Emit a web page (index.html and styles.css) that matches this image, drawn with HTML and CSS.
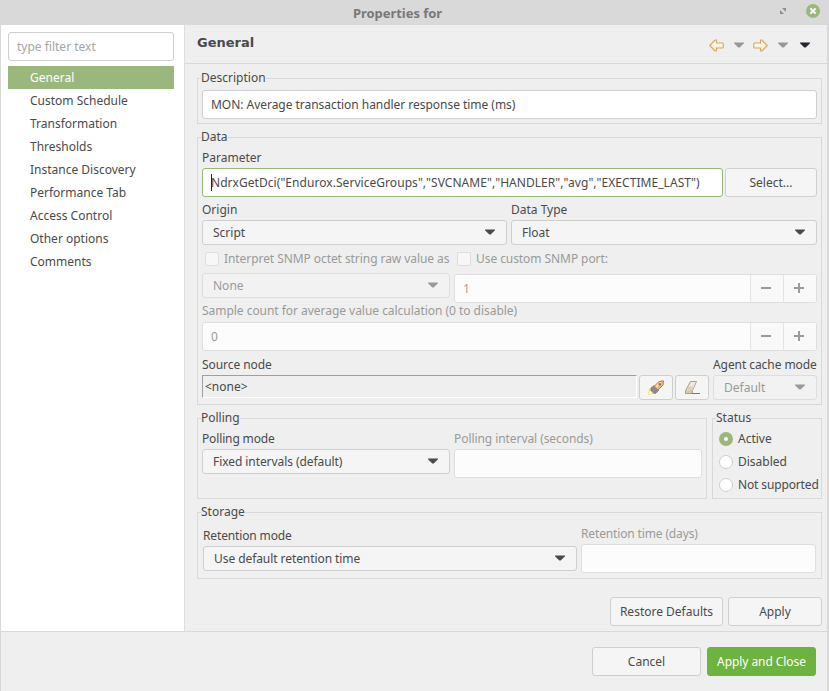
FILE: index.html
```html
<!DOCTYPE html>
<html lang="en">
<head>
<meta charset="utf-8">
<title>Properties for</title>
<link rel="stylesheet" href="styles.css">
</head>
<body>
<svg class="defs" width="0" height="0" aria-hidden="true">
  <defs>
    <symbol id="tri" viewBox="0 0 10 6"><path d="M0 .5h10v.8L5.7 5.5H4.3L0 1.3z" fill="currentColor"/></symbol>
    <symbol id="minus" viewBox="0 0 10 10"><path d="M0 4h10v2H0z" fill="currentColor"/></symbol>
    <symbol id="plus" viewBox="0 0 10 10"><path d="M0 4h4V0h2v4h4v2H6v4H4V6H0z" fill="currentColor"/></symbol>
    <linearGradient id="gold" x1="0" y1="0" x2="0" y2="1"><stop offset="0" stop-color="#fff"/><stop offset="1" stop-color="#fbe9c3"/></linearGradient>
    <symbol id="arrow" viewBox="0 0 15 13"><path d="M.8 6.5 6.2 1h1.3v3h6l.7.7v3.6l-.7.7h-6v3H6.2z" fill="url(#gold)" stroke="#d3a76c" stroke-width="1.1" stroke-linejoin="round"/></symbol>
  </defs>
</svg>
<div class="window">
  <header class="titlebar">
    <span class="title">Properties for</span>
    <svg class="restore" width="6" height="6" viewBox="0 0 6 6"><path d="M2 0h4v4zM0 2v4h4z" fill="#8f8f8f"/></svg>
    <svg class="close" width="14" height="14" viewBox="0 0 14 14"><circle cx="7" cy="7" r="7" fill="#9bb87c"/><path d="M4.4 4.4l5.2 5.2M9.6 4.4 4.4 9.6" stroke="#fff" stroke-width="1.8"/></svg>
  </header>
  <div class="body">
    <nav class="sidebar">
      <div class="field filter">type filter text</div>
      <ul class="tree">
        <li class="selected">General</li>
        <li>Custom Schedule</li>
        <li>Transformation</li>
        <li>Thresholds</li>
        <li>Instance Discovery</li>
        <li>Performance Tab</li>
        <li>Access Control</li>
        <li>Other options</li>
        <li>Comments</li>
      </ul>
    </nav>
    <main class="page">
      <div class="page-head">
        <h1>General</h1>
        <div class="nav-tools">
          <svg width="15" height="13"><use href="#arrow"/></svg>
          <svg class="mid" width="10" height="6"><use href="#tri"/></svg>
          <svg class="flip" width="15" height="13"><use href="#arrow"/></svg>
          <svg class="mid" width="10" height="6"><use href="#tri"/></svg>
          <svg class="dark" width="10" height="6"><use href="#tri"/></svg>
        </div>
      </div>
      <div class="content">
        <section class="group description">
          <h2>Description</h2>
          <div class="field"><span class="tight">MON: Average transaction handler response time (ms)</span></div>
        </section>

        <section class="group data">
          <h2>Data</h2>
          <div class="label">Parameter</div>
          <div class="row parameter">
            <div class="field focus"><i class="caret"></i><span class="expression">NdrxGetDci("Endurox.ServiceGroups","SVCNAME","HANDLER","avg","EXECTIME_LAST")</span></div>
            <div class="button">Select...</div>
          </div>
          <div class="row types">
            <div><div class="label">Origin</div><div class="combo">Script<svg width="10" height="6"><use href="#tri"/></svg></div></div>
            <div><div class="label">Data Type</div><div class="combo">Float<svg width="10" height="6"><use href="#tri"/></svg></div></div>
          </div>
          <div class="row snmp disabled">
            <div>
              <div class="check"><i></i><span class="tighter">Interpret SNMP octet string raw value as</span></div>
              <div class="combo">None<svg width="10" height="6"><use href="#tri"/></svg></div>
            </div>
            <div>
              <div class="check"><i></i><span class="tighter">Use custom SNMP port:</span></div>
              <div class="spin"><span class="warm">1</span><b><svg width="10" height="10"><use href="#minus"/></svg></b><b><svg width="10" height="10"><use href="#plus"/></svg></b></div>
            </div>
          </div>
          <div class="samples disabled">
            <div class="label"><span class="tight">Sample count for average value calculation (0 to disable)</span></div>
            <div class="spin"><span>0</span><b><svg width="10" height="10"><use href="#minus"/></svg></b><b><svg width="10" height="10"><use href="#plus"/></svg></b></div>
          </div>
          <div class="row source">
            <div><div class="label"><span class="tighter">Source node</span></div><div class="node">&lt;none&gt;</div></div>
            <div class="button icon">
              <svg width="18" height="16" viewBox="0 0 18 16">
                <path d="M1 15l1-6 3-2 4 4-3 3z" fill="#f7dc55"/>
                <path d="M1.5 14.5 3 10l3 3z" fill="#fffbd0"/>
                <path d="M4 8l3-2.5 5 4.5-3 3.2-2 .3-3-3z" fill="#8d8b91" stroke="#6c6870" stroke-width=".6"/>
                <path d="M7 6.5 12 1.6 16.4.8l-.2 4L11 10z" fill="#f3bd6a" stroke="#bd7940" stroke-width="1"/>
                <path d="M8.5 6 13 2l1.5 0-4.7 5z" fill="#ffe6ad"/>
                <circle cx="12.8" cy="4.3" r="1.2" fill="#5f7897"/>
              </svg>
            </div>
            <div class="button icon">
              <svg width="18" height="16" viewBox="0 0 18 16">
                <path d="M2.5 10.5 7.5 1.5h6L9.3 10.7v2.8H2.5z" fill="#d7c6b2" stroke="#a99580" stroke-width=".9"/>
                <path d="M3.6 10 8 2h4.8L9 10z" fill="#f3eadf"/>
                <path d="M5.6 6.5 11 6.5 9 10.4H3.6z" fill="#dfd0be"/>
                <path d="M9 13.5h8" stroke="#81746a" stroke-width="1"/>
              </svg>
            </div>
            <div><div class="label"><span class="tighter">Agent cache mode</span></div><div class="combo disabled">Default<svg width="10" height="6"><use href="#tri"/></svg></div></div>
          </div>
        </section>

        <div class="row middle">
          <section class="group polling">
            <h2>Polling</h2>
            <div class="row pair">
              <div><div class="label"><span class="narrow">Polling mode</span></div><div class="combo"><span class="tighter">Fixed intervals (default)</span><svg width="10" height="6"><use href="#tri"/></svg></div></div>
              <div class="disabled"><div class="label"><span class="tighter">Polling interval (seconds)</span></div><div class="field"></div></div>
            </div>
          </section>
          <section class="group status">
            <h2>Status</h2>
            <div class="radio on"><i></i><span>Active</span></div>
            <div class="radio"><i></i><span>Disabled</span></div>
            <div class="radio"><i></i><span class="narrow">Not supported</span></div>
          </section>
        </div>

        <section class="group storage">
          <h2>Storage</h2>
          <div class="row retention">
            <div class="mode"><div class="label"><span class="narrow">Retention mode</span></div><div class="combo"><span class="tighter">Use default retention time</span><svg width="10" height="6"><use href="#tri"/></svg></div></div>
            <div class="disabled"><div class="label"><span class="narrow">Retention time (days)</span></div><div class="field"></div></div>
          </div>
        </section>

        <div class="page-actions">
          <div class="button restore-btn">Restore Defaults</div>
          <div class="button apply-btn">Apply</div>
        </div>
      </div>
    </main>
  </div>
  <footer class="footer">
    <div class="button">Cancel</div>
    <div class="button primary"><span class="tighter">Apply and Close</span></div>
  </footer>
</div>
</body>
</html>
```
FILE: styles.css
```css
* { box-sizing: border-box; }
body {
  margin: 0;
  background: #efefef;
  color: #4a4a4a;
  font: 12px/18px "Noto Sans", sans-serif;
  white-space: nowrap;
}
h1, h2, ul { margin: 0; padding: 0; list-style: none; }
svg { display: block; flex: none; }
.defs { position: absolute; }
.tight { letter-spacing: -.035px; }
.tighter { letter-spacing: -.07px; }
.narrow { letter-spacing: -.14px; }
.expression { letter-spacing: .05px; }
.window {
  width: 829px;
  height: 691px;
  display: flex;
  flex-direction: column;
  border: solid #d9d9d9;
  border-width: 0 2px 0 1px;
  overflow: hidden;
}
.titlebar {
  height: 25px;
  flex: none;
  display: flex;
  align-items: center;
  background: #d9d9d9;
}
.title {
  margin-left: 352px;
  width: 427px;
  color: #787878;
  font-size: 13px;
  font-weight: 700;
  letter-spacing: -.05px;
}
.restore { margin-top: -3px; }
.close { margin: -3px 0 0 20px; }
.body { height: 606px; flex: none; display: flex; }
.sidebar {
  width: 184px;
  flex: none;
  padding: 7px 10px 0 7px;
  background: #fff;
  border-right: 1px solid #dedede;
}
.tree { margin-top: 5px; }
.tree li { height: 23px; padding-left: 22px; line-height: 23px; }
.tree .selected { background: #9bb87c; color: #fff; }
.page { flex: 1; min-width: 0; }
.page-head {
  height: 39px;
  display: flex;
  justify-content: space-between;
  border-bottom: 1px solid #d9d9d9;
}
h1 { margin-left: 12px; font: 700 13px/35px "DejaVu Sans", sans-serif; }
.nav-tools { display: flex; align-items: center; margin-right: 17px; padding-top: 2px; color: #979797; }
.nav-tools .mid { margin: 0 9px 0 10px; }
.nav-tools .flip + .mid { margin-right: 12px; }
.nav-tools .dark { color: #292331; }
.flip { transform: scaleX(-1); }

.content { padding: 14px 5px 0 12px; }
.group { border: 1px solid #d9d9d9; padding: 0 4px; }
.group h2 {
  width: max-content;
  height: 18px;
  margin: -10px 0 0 -1px;
  background: #efefef;
  font: inherit;
}
.row { display: flex; }
.label { height: 18px; }
.field {
  height: 29px;
  display: flex;
  align-items: center;
  padding: 1px 9px 0 8px;
  background: #fff;
  border: 1px solid #cfcfcf;
  border-radius: 3px;
}
.filter { color: #a5a5a5; }
.focus { position: relative; border-color: #97b776; }
.caret { position: absolute; left: 8px; top: 5px; width: 1px; height: 17px; background: #222; }
.button {
  height: 29px;
  display: flex;
  align-items: center;
  justify-content: center;
  background: #f5f5f5;
  border: 1px solid #cfcfcf;
  border-radius: 3px;
  padding-top: 1px;
}
.combo {
  height: 25px;
  display: flex;
  align-items: center;
  justify-content: space-between;
  padding: 1px 11px 0 10px;
  background: #f5f5f5;
  border: 1px solid #cfcfcf;
  border-radius: 3px;
}
.combo svg { margin-top: -2px; }
.disabled { color: #9a9a9a; }
.disabled .combo, .combo.disabled { background: #f2f2f2; border-color: #dedede; }
.disabled .field, .spin { background: #fcfcfc; border-color: #dedede; }
.spin { height: 29px; display: flex; border: 1px solid #dedede; border-radius: 3px; }
.spin span { flex: 1; padding-left: 8px; line-height: 27px; }
.spin .warm { color: #b09f96; }
.spin b {
  width: 33px;
  display: flex;
  align-items: center;
  padding: 0 0 1px 10px;
  border-left: 1px solid #e4e4e4;
  background: #f9f9f9;
}

.description { height: 46px; }
.description .field { margin-top: 3px; }
.data { height: 268px; margin-top: 13px; }
.data > .label { margin-top: 3px; }
.parameter { gap: 2px; margin-top: 1px; }
.parameter .field { width: 521px; }
.parameter .button { width: 92px; }
.types { margin-top: 4px; gap: 4px; }
.types > :first-child { width: 305px; }
.types > :last-child { width: 306px; }
.types .combo { margin-top: 1px; }
.snmp { margin-top: 5px; gap: 4px; }
.snmp > :first-child { width: 248px; }
.snmp > :last-child { width: 363px; }
.snmp .combo { margin-top: 5px; }
.snmp .spin { margin-top: 6px; }
.check, .radio { display: flex; align-items: center; height: 18px; padding-left: 3px; gap: 5px; }
.check i { width: 14px; height: 14px; flex: none; border: 1px solid #dedede; border-radius: 2px; background: #f7f7f7; }
.samples { margin-top: -1px; }
.samples .spin { margin-top: 2px; }
.source { margin-top: 5px; align-items: flex-end; }
.source > :first-child { width: 435px; }
.source .node {
  height: 23px;
  margin: 1px 0 2px;
  padding-left: 2px;
  line-height: 22px;
  border: 1px solid #fff;
  border-top-color: #9f9f9f;
  border-left-color: #9f9f9f;
}
.source .icon { width: 34px; height: 25px; margin-left: 2px; padding: 0; }
.source > :last-child { width: 104px; margin-left: 4px; }
.source .combo { margin-top: 1px; }

.middle { margin-top: 13px; gap: 5px; }
.polling { width: 510px; height: 81px; }
.pair { gap: 4px; }
.pair > div { width: 248px; margin-top: 3px; }
.pair .field, .pair .combo { margin-top: 1px; }
.status { width: 110px; height: 81px; }
.status .radio { height: 23px; padding-left: 2px; }
.radio i { width: 14px; height: 14px; flex: none; border: 1px solid #cfcfcf; border-radius: 50%; background: #fff; }
.radio.on i { border: 5px solid #9bb87c; }

.storage { height: 67px; margin-top: 13px; padding-left: 5px; }
.storage h2 { margin-left: -2px; }
.retention { gap: 4px; margin-top: 4px; }
.retention > .mode { width: 374px; padding-top: 2px; }
.retention > .disabled { width: 235px; }
.retention .field { margin-top: 1px; }
.retention .combo { margin-top: 1px; }

.page-actions { display: flex; gap: 5px; justify-content: flex-end; margin-top: 18px; }
.restore-btn { width: 113px; }
.apply-btn { width: 94px; }
.footer {
  flex: 1;
  display: flex;
  justify-content: flex-end;
  gap: 6px;
  padding: 15px 11px 0 0;
  border-top: 1px solid #d9d9d9;
}
.footer .button { width: 109px; }
.footer .primary { background: #6cb33f; border-color: #6cb33f; color: #fff; }
```
